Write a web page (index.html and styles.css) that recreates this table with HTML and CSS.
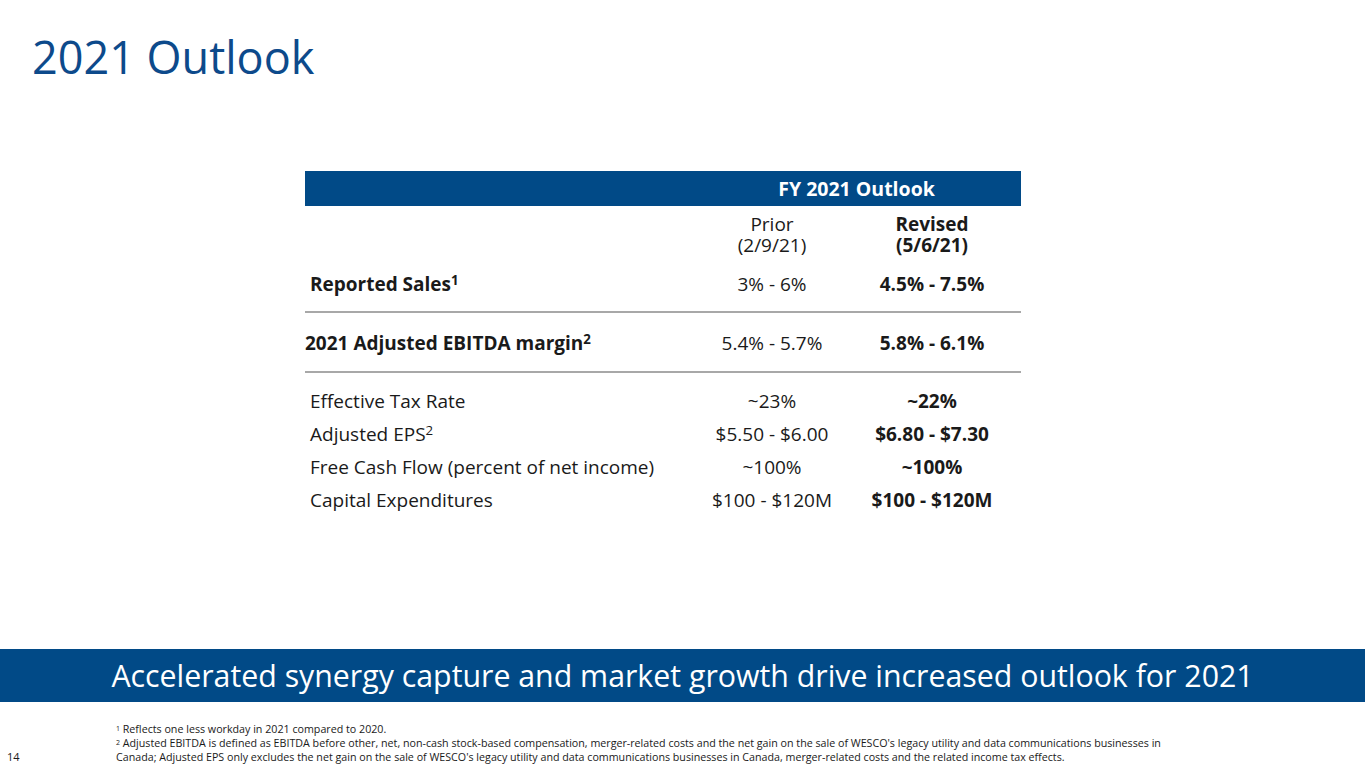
FILE: index.html
```html
<!DOCTYPE html>
<html>
<head>
<meta charset="utf-8">
<link rel="stylesheet" href="styles.css">
</head>
<body>
<div class="page">
  <h1 class="title">2021 Outlook</h1>
  <div class="table">
    <div class="row head">
      <div class="cell"></div>
      <div class="cell span">FY 2021 Outlook</div>
    </div>
    <div class="row sub">
      <div class="cell"></div>
      <div class="cell c">Prior<br>(2/9/21)</div>
      <div class="cell c b">Revised<br>(5/6/21)</div>
      <div class="cell"></div>
    </div>
    <div class="row rep rule">
      <div class="cell lbl b ind">Reported Sales<sup>1</sup></div>
      <div class="cell c">3% - 6%</div>
      <div class="cell c b">4.5% - 7.5%</div>
      <div class="cell"></div>
    </div>
    <div class="row ebit rule">
      <div class="cell lbl b">2021 Adjusted EBITDA margin<sup>2</sup></div>
      <div class="cell c">5.4% - 5.7%</div>
      <div class="cell c b">5.8% - 6.1%</div>
      <div class="cell"></div>
    </div>
    <div class="group">
      <div class="row line">
        <div class="cell lbl ind">Effective Tax Rate</div>
        <div class="cell c">~23%</div>
        <div class="cell c b">~22%</div>
        <div class="cell"></div>
      </div>
      <div class="row line">
        <div class="cell lbl ind">Adjusted EPS<sup>2</sup></div>
        <div class="cell c">$5.50 - $6.00</div>
        <div class="cell c b">$6.80 - $7.30</div>
        <div class="cell"></div>
      </div>
      <div class="row line">
        <div class="cell lbl ind">Free Cash Flow (percent of net income)</div>
        <div class="cell c">~100%</div>
        <div class="cell c b">~100%</div>
        <div class="cell"></div>
      </div>
      <div class="row line">
        <div class="cell lbl ind">Capital Expenditures</div>
        <div class="cell c">$100 - $120M</div>
        <div class="cell c b">$100 - $120M</div>
        <div class="cell"></div>
      </div>
    </div>
  </div>
  <div class="banner">Accelerated synergy capture and market growth drive increased outlook for 2021</div>
  <div class="foot">
    <div class="pnum">14</div>
    <div class="notes">
      <p><sup>1</sup> Reflects one less workday in 2021 compared to 2020.</p>
      <p><sup>2</sup> Adjusted EBITDA is defined as EBITDA before other, net, non-cash stock-based compensation, merger-related costs and the net gain on the sale of WESCO's legacy utility and data communications businesses in Canada; Adjusted EPS only excludes the net gain on the sale of WESCO's legacy utility and data communications businesses in Canada, merger-related costs and the related income tax effects.</p>
    </div>
  </div>
</div>
</body>
</html>
```

FILE: styles.css
```css
html, body {
  margin: 0;
  padding: 0;
  background: #ffffff;
}
.page {
  width: 1365px;
  height: 768px;
  overflow: hidden;
  font-family: "Open Sans", "Liberation Sans", sans-serif;
  color: #1a1a1a;
}
.title {
  margin: 0;
  padding: 27px 0 0 32px;
  font-size: 45px;
  line-height: 60px;
  font-weight: 400;
  color: #0d4a8b;
}
.table {
  margin: 84px 0 0 305px;
  width: 716px;
  font-size: 19px;
}
.row {
  display: grid;
  grid-template-columns: 387px 160px 160px 1fr;
  align-items: center;
}
.head {
  height: 35px;
  background: #014a87;
  color: #ffffff;
  font-weight: 700;
  font-size: 19.5px;
}
.head .span {
  grid-column: 2 / 5;
  text-align: center;
}
.cell {
  line-height: 21px;
}
.c {
  text-align: center;
}
.b {
  font-weight: 700;
}
.ind {
  padding-left: 5px;
}
.sub {
  padding: 8px 0 6px;
}
.rule {
  border-bottom: 2px solid #a8a8a8;
}
.rep {
  box-sizing: border-box;
  height: 51px;
  padding-bottom: 5px;
}
.ebit {
  height: 60px;
  box-sizing: border-box;
  padding-top: 2px;
}
.group {
  padding-top: 12px;
}
.line {
  height: 33px;
}
sup {
  font-size: 0.7em;
  line-height: 0;
  vertical-align: 0.45em;
}
.banner {
  margin-top: 132px;
  height: 53px;
  background: #014a87;
  color: #ffffff;
  font-size: 30.3px;
  line-height: 53px;
  text-align: center;
}
.foot {
  display: flex;
  padding-top: 20px;
}
.pnum {
  width: 116px;
  box-sizing: border-box;
  padding-left: 7px;
  align-self: flex-end;
  font-size: 11px;
  line-height: 14px;
}
.notes {
  width: 1070px;
  font-size: 10.7px;
  line-height: 14px;
}
.notes p {
  margin: 0;
}
.notes sup {
  font-size: 0.65em;
  vertical-align: 0.35em;
}
```
